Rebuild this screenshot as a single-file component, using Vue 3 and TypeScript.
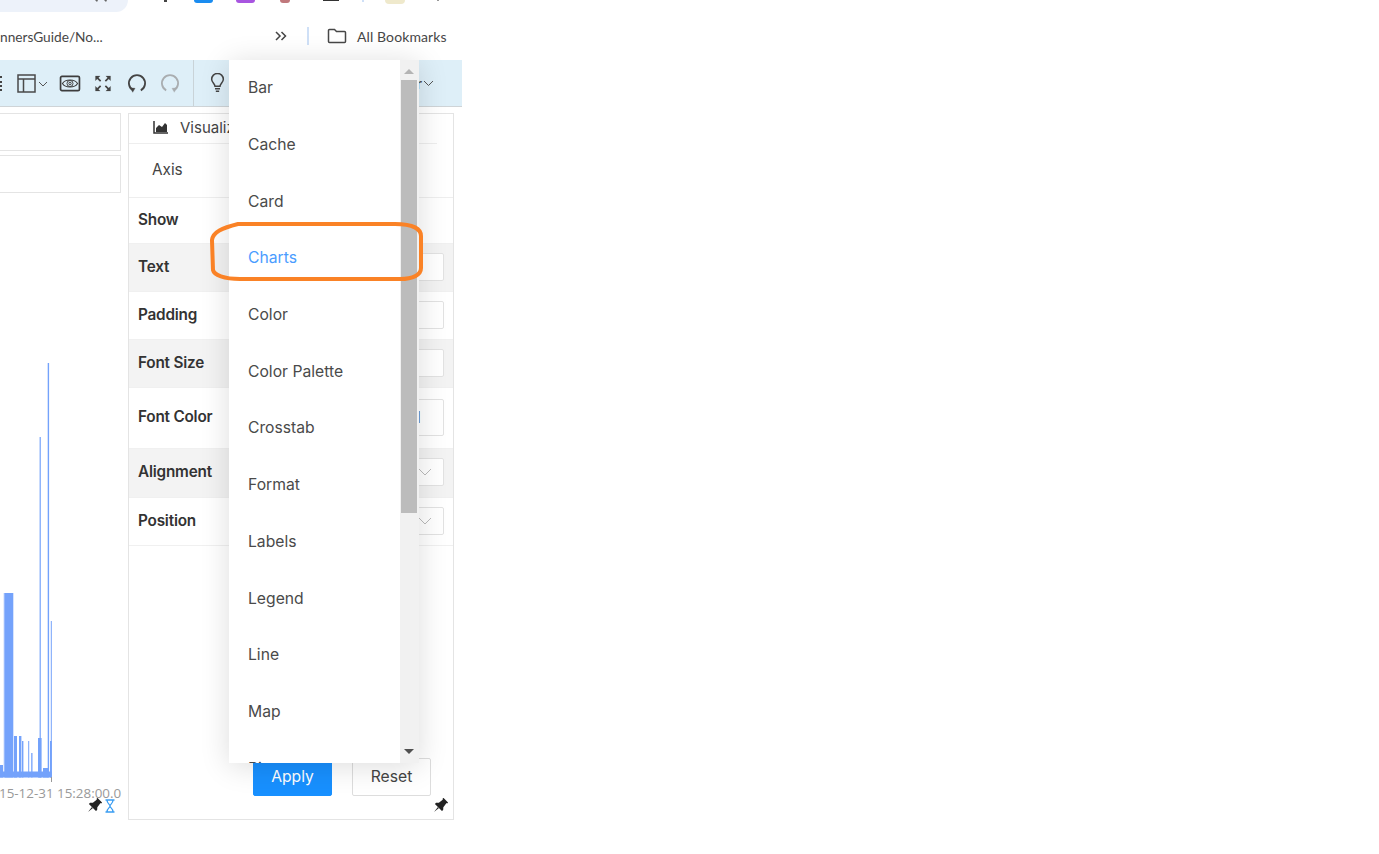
<script setup lang="ts">
const items: string[] = ['Bar', 'Cache', 'Card', 'Charts', 'Color', 'Color Palette', 'Crosstab', 'Format', 'Labels', 'Legend', 'Line', 'Map', 'Pie']

interface Row { label: string; shaded: boolean; tall: boolean; tail: string; arrow: boolean; box: boolean; height: number }
const rows: Row[] = [
  { label: 'Show', shaded: false, tall: false, height: 46, tail: '', arrow: false, box: false },
  { label: 'Text', shaded: true, tall: false, height: 48, tail: '', arrow: false, box: true },
  { label: 'Padding', shaded: false, tall: false, height: 48, tail: '', arrow: false, box: true },
  { label: 'Font Size', shaded: true, tall: false, height: 48, tail: '', arrow: false, box: true },
  { label: 'Font Color', shaded: false, tall: true, height: 61, tail: '1', arrow: false, box: true },
  { label: 'Alignment', shaded: true, tall: false, height: 49, tail: '', arrow: true, box: true },
  { label: 'Position', shaded: false, tall: false, height: 48, tail: '', arrow: true, box: true }
]

const bars: [number, number, number][] = [
  [0, 52, 771.5], [0, 3, 765], [4.6, 8.7, 593], [14, 3, 736], [19, 2.4, 736], [22, 1.4, 741],
  [28.2, 1, 741], [31.2, 1.3, 753], [38, 3.6, 738], [39.6, 1.2, 437], [43, 5, 768], [47.7, 1.4, 363],
  [50, 1.8, 741], [50.8, 1, 621]
]
</script>

<template>
  <div class="page">
    <div class="chrome">
      <div class="topline">
        <div class="omni">
          <svg class="star" width="12" height="3" viewBox="0 0 12 3" fill="#666"><path d="M0 0h3l-1 2zM9 0h3l-1 2z" /></svg>
        </div>
        <div class="ext-icons">
          <i class="ext dot"></i>
          <i class="ext blue"></i>
          <i class="ext purple"></i>
          <i class="ext red"></i>
          <i class="ext black"></i>
          <i class="ext tick"></i>
          <i class="ext avatar"></i>
          <i class="ext end"></i>
        </div>
      </div>
      <div class="bookmarks">
        <span class="crumb">nnersGuide/No...</span>
        <span class="chev">
          <svg width="14" height="12" viewBox="0 0 14 12" fill="none" stroke="#444" stroke-width="1.5"><path d="M2 2l4 4-4 4M7.500 2l4 4-4 4" /></svg>
        </span>
        <span class="divider"></span>
        <svg class="folder" width="20" height="16" viewBox="0 0 20 16" fill="none" stroke="#474747" stroke-width="1.500"><path d="M1.500 13V2.500a1 1 0 0 1 1-1h5l2 2h8a1 1 0 0 1 1 1V13.500a1 1 0 0 1-1 1h-15a1 1 0 0 1-1-1z" /></svg>
        <span class="allb">All Bookmarks</span>
      </div>
    </div>

    <div class="toolbar">
      <div class="tools">
        <span class="cut"></span>
        <svg width="19" height="19" viewBox="0 0 19 19" fill="none" stroke="#4a4a4a" stroke-width="1.500"><rect x="1" y="1" width="17" height="17" /><path d="M1 5h17M6.500 5v13" /></svg>
        <svg class="mini" width="10" height="7" viewBox="0 0 10 7" fill="none" stroke="#555"><path d="M1 1l4 4 4-4" /></svg>
        <svg class="gap-a" width="22" height="17" viewBox="0 0 22 18" fill="none" stroke="#3d3d3d"><rect x="1" y="1.500" width="20" height="15" rx="1.500" stroke-width="1.800" /><path d="M3 9c3-5 13-5 16 0-3 5-13 5-16 0z" stroke-width="1.200" /><circle cx="11" cy="9" r="3.200" /><circle cx="11" cy="9" r="1.300" /></svg>
        <svg class="gap-b" width="18" height="17" viewBox="0 0 18 18" fill="#444" stroke="#444" stroke-width="1.800"><path d="M3 3l3.500 3.500M15 3l-3.500 3.500M3 15l3.500-3.500M15 15l-3.500-3.500" /><path d="M1 6V1h5zM12 1h5v5zM1 12v5h5zM17 12v5h-5z" stroke-width=".2" /></svg>
        <svg class="gap-d" width="20" height="19" viewBox="0 0 20 20" fill="none" stroke="#444" stroke-width="1.900"><path d="M6 17.200A8.500 8.500 0 1 1 14 17.200" /><path d="M3 14.500l5 .5-2.500 4.300z" fill="#444" stroke-width=".3" /></svg>
        <svg class="gap-c" width="20" height="19" viewBox="0 0 20 20" fill="none" stroke="#a9adb0" stroke-width="1.900"><path d="M6 17.200A8.500 8.500 0 1 1 14 17.200" /><path d="M17 14.500l-5 .5 2.500 4.300z" fill="#a9adb0" stroke-width=".3" /></svg>
        <span class="sep"></span>
        <svg class="bulb" width="17" height="20" viewBox="0 0 18 24" fill="none" stroke="#444" stroke-width="1.800"><path d="M6 16c0-3-4-4.500-4-8.500a7 7 0 0 1 14 0c0 4-4 5.500-4 8.500z" /><path d="M6 19h6M7 22h4" /></svg>
      </div>
      <div class="tool-end">
        <span class="tail">r</span>
        <svg width="11" height="7" viewBox="0 0 11 7" fill="none" stroke="#555"><path d="M1 1l4.500 4.500L10 1" /></svg>
      </div>
    </div>

    <div class="work">
      <div class="left">
        <div class="inbox"></div>
        <div class="inbox"></div>
        <svg class="chart" width="122" height="627" viewBox="0 193 122 627">
          <rect x="3.700" y="593" width="1.200" height="184" fill="#a9c4fc" />
          <rect v-for="(b, i) in bars" :key="i" :x="b[0]" :y="b[2]" :width="b[1]" :height="777.5 - b[2]" fill="#74a2fb" />
          <path d="M51.500 777v5" stroke="#999" />
          <text x="-1" y="798" class="stamp">15-12-31 15:28:00.0</text>
        </svg>
        <div class="status">
          <svg width="15" height="15" viewBox="0 0 18 18" fill="#222"><g transform="rotate(45 9 9)"><path d="M5 0h8v1.800h-1L12.800 8 15 10.500V12.500H3V10.500L5.200 8 6 1.800H5z" /><path d="M8.200 12.500h1.600L9 20z" /></g></svg>
          <svg width="10" height="14" viewBox="0 0 10 14" fill="none" stroke="#3a9df2" stroke-width="1.300"><path d="M.5 1h9M.5 13h9M2 1c0 4 3 4 3 6s-3 2-3 6M8 1c0 4-3 4-3 6s3 2 3 6" /></svg>
        </div>
      </div>

      <div class="panel">
        <div class="tab-row">
          <svg width="15" height="13" viewBox="0 0 15 13"><path d="M1 0v12h14" fill="none" stroke="#333" stroke-width="1.500" /><path d="M3 11V7l3-3 3 2 3-4 2 2v7z" fill="#333" /></svg>
          <span class="tab-label">Visualization</span>
        </div>
        <div class="axis-row">Axis</div>
        <div v-for="r in rows" :key="r.label" class="row" :class="{ shaded: r.shaded }" :style="{ height: r.height + 'px' }">
          <span class="row-label">{{ r.label }}</span>
          <span v-if="r.box" class="ctl" :class="{ tall: r.tall }">
            <span v-if="r.tail" class="ctl-tail">{{ r.tail }}</span>
            <svg v-if="r.arrow" width="14" height="8" viewBox="0 0 14 8" fill="none" stroke="#bbb"><path d="M1 1l6 6 6-6" /></svg>
          </span>
        </div>
        <div class="spacer"></div>
        <div class="actions">
          <button class="btn apply">Apply</button>
          <button class="btn reset">Reset</button>
        </div>
        <div class="panel-foot">
          <svg width="15" height="15" viewBox="0 0 18 18" fill="#222"><g transform="rotate(45 9 9)"><path d="M5 0h8v1.800h-1L12.800 8 15 10.500V12.500H3V10.500L5.200 8 6 1.800H5z" /><path d="M8.200 12.500h1.600L9 20z" /></g></svg>
        </div>
      </div>
    </div>

    <div class="dropdown">
      <ul class="list">
        <li v-for="it in items" :key="it" :class="{ active: it === 'Charts' }">{{ it }}</li>
      </ul>
      <div class="scrollbar">
        <span class="arrow up"></span>
        <span class="thumb"></span>
        <span class="arrow down"></span>
      </div>
    </div>

    <svg class="note" width="218" height="62" viewBox="0 0 218 62" fill="none">
      <path d="M30 3L187 3C205 3 213 8 213 15L213 47C213 54 205 58 192 58L32 58C16 58 6 54 5 49L4 19C5 11 14 7 30 3Z" stroke="#fa8226" stroke-width="4" />
    </svg>
  </div>
</template>

<style>
html, body { margin: 0; background: #fff; }
</style>

<style scoped>
.page {
  position: relative;
  width: 1379px;
  height: 854px;
  overflow: hidden;
  background: #fff;
  font-family: "Inter", "Liberation Sans", sans-serif;
  color: #444;
}
.chrome { width: 462px; height: 60px; display: flex; flex-direction: column; font-family: "Lato", sans-serif; }
.topline { height: 12px; display: flex; position: relative; }
.omni { width: 128px; height: 12px; background: #edf2fa; border-radius: 0 0 14px 0; position: relative; overflow: hidden; }
.star { position: absolute; left: 95px; top: 0; }
.ext-icons { display: flex; align-items: flex-start; height: 5px; }
.ext { display: block; flex: none; }
.dot { width: 3px; height: 2px; background: #444; margin-left: 36px; }
.blue { width: 19px; height: 3px; background: #1a8cf0; margin-left: 27px; border-radius: 0 0 3px 3px; }
.purple { width: 19px; height: 3px; background: #a855e0; margin-left: 23px; border-radius: 0 0 3px 3px; }
.red { width: 10px; height: 3px; background: #c0787c; margin-left: 25px; border-radius: 0 0 5px 5px; }
.black { width: 16px; height: 1px; background: #333; margin-left: 33px; }
.tick { width: 2px; height: 2px; background: #cfe0f7; margin-left: 23px; }
.avatar { width: 20px; height: 4px; background: #efe9cc; margin-left: 21px; border-radius: 0 0 10px 10px; }
.end { width: 2px; height: 1px; background: #999; margin-left: 32px; }
.bookmarks { height: 48px; display: flex; align-items: center; font-size: 14px; color: #474747; }
.crumb { width: 274px; flex: none; font-size: 13.7px; white-space: nowrap; }
.chev { width: 14px; display: flex; margin-right: 19px; }
.divider { width: 2px; height: 18px; background: #cfe0f7; margin-right: 18px; }
.folder { margin-right: 10px; flex: none; }
.allb { white-space: nowrap; letter-spacing: .1px; }
.toolbar {
  width: 462px;
  height: 47px;
  box-sizing: border-box;
  background: #deeff8;
  border-bottom: 1px solid #cfd4d7;
  display: flex;
  align-items: center;
  justify-content: space-between;
}
.tools { display: flex; align-items: center; height: 100%; }
.cut { width: 2px; height: 15px; margin-right: 13px; border-left: 2px dotted #444; }
.mini { margin: 3px 0 0 2px; }
.gap-a { margin-left: 11px; }
.gap-b { margin-left: 13px; }
.gap-c { margin-left: 13px; }
.gap-d { margin-left: 15px; }
.sep { width: 1px; height: 100%; background: #c9d3d8; margin: 0 15px 0 13px; }
.bulb { flex: none; }
.tool-end { display: flex; align-items: center; gap: 1px; padding-right: 28px; font-size: 15px; font-family: "Lato", sans-serif; }
.work { display: flex; gap: 6px; padding-top: 6px; }
.left { width: 122px; position: relative; flex: none; display: flex; flex-direction: column; }
.inbox { box-sizing: border-box; width: 121px; height: 38px; border: 1px solid #e4e4e4; border-left: none; margin-bottom: 4px; }
.inbox + .inbox { margin-bottom: 0; }
.chart { display: block; overflow: hidden; flex: none; }
.stamp { font-family: "Open Sans", sans-serif; font-size: 13.4px; fill: #999; }
.status { position: absolute; left: 87px; top: 685px; display: flex; align-items: center; gap: 3px; }
.panel {
  width: 326px;
  height: 707px;
  box-sizing: border-box;
  border: 1px solid #e4e4e4;
  display: flex;
  flex-direction: column;
}
.tab-row { height: 30px; box-sizing: border-box; display: flex; align-items: center; gap: 12px; padding: 0 0 2px 24px; margin-right: 16px; border-bottom: 1px solid #eee; font-size: 15px; white-space: nowrap; overflow: hidden; }
.axis-row { height: 54px; box-sizing: border-box; display: flex; align-items: center; padding: 0 0 3px 23px; border-bottom: 1px solid #eee; font-size: 15.3px; }
.row { box-sizing: border-box; display: flex; align-items: center; justify-content: space-between; padding: 0 9px; border-bottom: 1px solid #f0f0f0; }
.row.shaded { background: #f3f3f3; }
.row-label { font-weight: 600; font-size: 15.3px; letter-spacing: -.2px; color: #333; white-space: nowrap; margin-bottom: 3px; }
.ctl { box-sizing: border-box; width: 144px; height: 28px; background: #fff; border: 1px solid #e2e2e2; border-radius: 2px; display: flex; align-items: center; justify-content: flex-end; padding-right: 11px; flex: none; margin-bottom: 2px; }
.ctl.tall { height: 37px; padding-right: 22px; font-size: 15.7px; color: #555; }
.spacer { flex: 1; }
.actions { display: flex; justify-content: flex-end; gap: 20px; padding-right: 22px; }
.btn { width: 79px; height: 38px; box-sizing: border-box; font-family: inherit; font-size: 15.7px; border-radius: 2px; padding: 0 0 2px; }
.apply { background: #1890ff; border: 1px solid #1890ff; color: #fff; }
.reset { background: #fff; border: 1px solid #ddd; color: #444; }
.panel-foot { height: 23px; display: flex; justify-content: flex-end; padding: 2px 5px 0 0; box-sizing: border-box; }
.dropdown {
  position: absolute;
  left: 229px;
  top: 60px;
  width: 190px;
  height: 703px;
  background: #fff;
  box-shadow: 0 3px 28px rgba(0, 0, 0, .14);
  overflow: hidden;
  display: flex;
}
.list { list-style: none; margin: 0; padding: 0; width: 171px; flex: none; }
.list li { height: 56.7px; display: flex; align-items: center; padding: 0 0 1px 19px; box-sizing: border-box; font-size: 15.7px; color: #4a4a4a; }
.list li.active { color: #4a9cff; }
.scrollbar { width: 19px; background: #f1f1f1; position: relative; }
.thumb { position: absolute; left: 1px; top: 20px; width: 16px; height: 433px; background: #bcbcbc; }
.arrow { position: absolute; left: 4px; width: 0; height: 0; border-left: 5px solid transparent; border-right: 5px solid transparent; }
.arrow.up { top: 9px; border-bottom: 5px solid #b4b4b4; }
.arrow.down { bottom: 9px; border-top: 5px solid #505050; }
.note { position: absolute; left: 208px; top: 221px; }
</style>
